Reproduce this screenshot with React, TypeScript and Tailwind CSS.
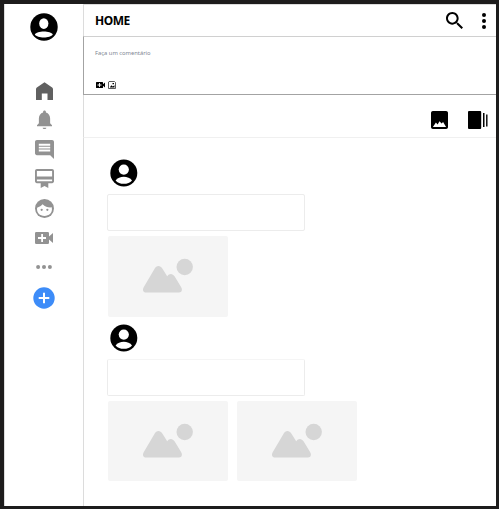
import type { ReactNode } from "react";

type IconProps = { box: string; className: string; children: ReactNode };

function Icon({ box, className, children }: IconProps) {
  return (
    <svg viewBox={box} preserveAspectRatio="none" fill="currentColor" className={`block shrink-0 ${className}`}>
      {children}
    </svg>
  );
}

function SidebarAvatar() {
  return (
    <Icon box="0 0 28 28" className="h-7 w-7 text-black">
      <circle cx="14" cy="14" r="13.7" />
      <ellipse cx="13.8" cy="10.6" rx="4.6" ry="5.3" fill="#fff" />
      <path d="M4.8 21.4C6.8 17.4 20.8 17.4 22.8 21.4 20.3 25.4 7.3 25.4 4.8 21.4Z" fill="#fff" />
    </Icon>
  );
}

function PostAvatar() {
  return (
    <Icon box="0 0 28 28" className="h-7 w-7 text-black">
      <circle cx="13.8" cy="14" r="13.5" />
      <circle cx="13.8" cy="10.6" r="5.1" fill="#fff" />
      <path d="M5.6 21.4C9 16.6 18.6 16.6 22 21.4 18.6 25.9 9 25.9 5.6 21.4Z" fill="#fff" />
    </Icon>
  );
}

function ImagePlaceholder({ className }: { className: string }) {
  return (
    <div className={`w-[120px] rounded-[2px] bg-[#f5f5f5] ${className}`}>
      <svg viewBox="0 0 120 80" className="block h-20 w-[120px]" fill="#d6d6d6">
        <circle cx="76.7" cy="31" r="8.2" />
        <path d="M38 56.5C35 56.5 34.3 53.5 35.7 51.2L46.3 33.2C48.3 29.3 52.2 28.9 54.5 32.8L59.2 40.3C61.5 37 64.5 37.2 66.7 40.5L73.2 51.3C74.6 53.8 74 56.5 71 56.5Z" />
      </svg>
    </div>
  );
}

function VideoPlus({ className }: { className: string }) {
  return (
    <Icon box="3 6 18 12" className={className}>
      <path
        fillRule="evenodd"
        d="M4.2 6H15.8Q17 6 17 7.2V10.5L21 7V17L17 13.5V16.8Q17 18 15.8 18H4.2Q3 18 3 16.8V7.2Q3 6 4.2 6ZM9.2 8V11.1H6V12.9H9.2V16H11V12.9H14V11.1H11V8Z"
      />
    </Icon>
  );
}

function Sidebar() {
  return (
    <nav className="flex w-20 shrink-0 flex-col items-center border-x border-[#dcdcdc] text-[#929292]">
      <div className="mt-[9px]">
        <SidebarAvatar />
      </div>
      <Icon box="0 0 17 18" className="mt-[41px] h-[18px] w-[17px] text-[#606060]">
        <path d="M8.5.3 15.8 5.3Q17 6 17 7.3V18H11.5V11.5H5.8V18H0V7.3Q0 6 1.2 5.3Z" />
      </Icon>
      <Icon box="4 2 16 20" className="mt-2.5 h-[19px] w-[15px]">
        <path d="M12 22c1.1 0 2-.7 2-1.4h-4c0 .7.9 1.4 2 1.4zm6-6v-5c0-3.07-1.64-5.64-4.5-6.32V4c0-.83-.67-1.5-1.5-1.5s-1.5.67-1.5 1.5v.68C7.63 5.36 6 7.92 6 11v5l-2 2v1h16v-1l-2-2z" />
      </Icon>
      <Icon box="2 2 20 20" className="mt-[10.5px] h-[19px] w-[19px]">
        <path d="M21.99 4c0-1.1-.89-2-1.99-2H4c-1.1 0-2 .9-2 2v12c0 1.1.9 2 2 2h14l4 4-.01-18zM18 14H6v-2h12v2zm0-3H6V9h12v2zm0-3H6V6h12v2z" />
      </Icon>
      <Icon box="2 2 20 20" className="mt-2.5 h-[19px] w-[19px]">
        <path d="M20 2H4c-1.11 0-2 .89-2 2v11c0 1.11.89 2 2 2h4v5l4-2 4 2v-5h4c1.11 0 2-.89 2-2V4c0-1.11-.89-2-2-2zm0 13H4v-2h16v2zm0-5H4V4h16v6z" />
      </Icon>
      <Icon box="2 2 20 20" className="mt-[11px] h-[19px] w-[19px]">
        <circle cx="12" cy="12" r="10" />
        <path d="M4.2 11.2Q8 10.3 10 7.5C12.8 10.2 16 11.2 19.6 10.8 21 17 16.5 19.8 12 19.8 7 19.8 3.5 16.5 4.2 11.2Z" fill="#fff" />
        <circle cx="9" cy="13.4" r="1.2" />
        <circle cx="15" cy="13.4" r="1.2" />
      </Icon>
      <VideoPlus className="mt-3.5 h-3 w-[18px]" />
      <Icon box="0 0 16 4" className="mt-[21.5px] h-1 w-4">
        <circle cx="2.1" cy="2" r="2" />
        <circle cx="8" cy="2" r="2" />
        <circle cx="13.9" cy="2" r="2" />
      </Icon>
      <Icon box="0 0 22 22" className="mt-[17.5px] h-[22px] w-[22px] text-[#3d8cf8]">
        <circle cx="11" cy="11" r="10.7" />
        <path d="M5.7 11H16.3M11 5.7V16.3" stroke="#fff" strokeWidth="2" />
      </Icon>
    </nav>
  );
}

export default function App() {
  return (
    <div className="flex h-[509px] w-[499px] border-t-4 border-r-[3px] border-b-[3px] border-l-4 border-[#1d1c1c] bg-white font-['Noto_Sans',sans-serif]">
      <Sidebar />
      <main className="-ml-px min-w-0 flex-1 border-t border-[#dcdcdc]">
        <header className="flex h-[31px] items-center border-l border-[#dcdcdc] pl-[11px]">
          <h1 className="text-[12px] leading-none font-bold tracking-[-0.5px] text-black">HOME</h1>
          <Icon box="3 3 17.5 17.5" className="mr-px ml-auto h-[17px] w-[17px] text-black">
            <path d="M15.5 14h-.79l-.28-.27C15.41 12.59 16 11.11 16 9.5 16 5.91 13.09 3 9.5 3S3 5.91 3 9.5 5.91 16 9.5 16c1.61 0 3.09-.59 4.23-1.57l.27.28v.79l5 4.99L20.49 19l-4.99-5zm-6 0C7.01 14 5 11.99 5 9.5S7.01 5 9.5 5 14 7.01 14 9.5 11.99 14 9.5 14z" />
          </Icon>
          <Icon box="0 0 4 16" className="mr-2.5 ml-[18px] h-4 w-1 text-black">
            <circle cx="2" cy="2" r="2" />
            <circle cx="2" cy="8" r="2" />
            <circle cx="2" cy="14" r="2" />
          </Icon>
        </header>
        <section className="h-[59px] border-t border-b border-l border-t-[#d0d0d0] border-b-[#a3a3a3] border-l-[#a3a3a3] pt-[11px] pl-[11px]">
          <p className="h-2.5 text-[5.8px] leading-[10px] whitespace-nowrap text-[#808693]">Faça um comentário</p>
          <div className="mt-[23px] ml-px flex items-center gap-[3px] text-black">
            <VideoPlus className="h-[6px] w-[9px]" />
            <Icon box="0 0 8 8" className="h-2 w-2">
              <path d="M1 .5H6.5L7.5 1.5V7.5H.5V1Z" fill="none" stroke="#333" strokeWidth=".8" />
              <path d="M2 6 3.5 4.3 4.7 5.5 6.5 4.2V6.5H2ZM4.5 2H6V3.3H4.5Z" />
            </Icon>
          </div>
        </section>
        <div className="flex h-[43px] border-b border-l border-b-[#f0f0f0] border-l-[#dcdcdc] pt-4 pr-2">
          <Icon box="3 3 18 18" className="mr-px ml-auto h-[18px] w-[17px] text-black">
            <path d="M21 19V5c0-1.1-.9-2-2-2H5c-1.1 0-2 .9-2 2v14c0 1.1.9 2 2 2h14c1.1 0 2-.9 2-2z" />
            <path d="M5 19 8.2 14.4 10 16.4 12 13.2 14.2 15.5 15.8 14 19 19Z" fill="#fff" />
          </Icon>
          <Icon box="0 0 20 18" className="ml-[19px] h-[18px] w-5 text-black">
            <rect width="13.2" height="18" rx="1" />
            <rect x="15" y="2" width="1.5" height="14" />
            <rect x="18.1" y="3.5" width="1.4" height="12" />
          </Icon>
        </div>
        <div className="h-[368px] border-l border-[#dcdcdc] pl-6">
          <article>
            <div className="ml-0.5 pt-[21px]">
              <PostAvatar />
            </div>
            <div className="mt-[7px] -ml-px h-[37px] w-[198px] rounded-[2px] border border-[#ececec]" />
            <ImagePlaceholder className="mt-[5px] h-[81px]" />
          </article>
          <article>
            <div className="ml-0.5 pt-[7px]">
              <PostAvatar />
            </div>
            <div className="mt-[7px] -ml-px h-[37px] w-[198px] rounded-[2px] border border-[#ececec] border-t-[#f5f5f5]" />
            <div className="mt-[5px] flex gap-[9px]">
              <ImagePlaceholder className="h-20" />
              <ImagePlaceholder className="h-20" />
            </div>
          </article>
        </div>
      </main>
    </div>
  );
}
